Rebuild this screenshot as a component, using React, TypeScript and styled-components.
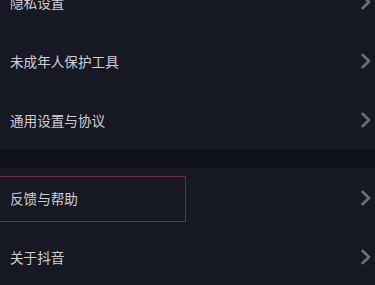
import React from "react"
import styled, { createGlobalStyle } from "styled-components"

const GlobalStyle = createGlobalStyle`
	html, body {
		margin: 0;
		padding: 0;
		background-color: #161823;
	}
`

const SPage = styled.div`
	width: 375px;
	height: 285px;
	overflow: hidden;
	background-color: #161823;
	font-family: "Noto Sans CJK SC", "Noto Sans", sans-serif;
`

const SList = styled.div`
	display: flex;
	flex-direction: column;
	margin-top: -28px;
`

const SRow = styled.div`
	position: relative;
	display: flex;
	align-items: center;
	justify-content: space-between;
	height: 59px;
	padding: 0 3px 0 10px;
	box-sizing: border-box;
`

const SLabel = styled.span`
	font-size: 13.6px;
	color: #cfd0d6;
`

const SDivider = styled.div`
	height: 19px;
	background-color: #10121a;
`

const SHighlight = styled.div`
	position: absolute;
	left: -2px;
	top: 8px;
	width: 188px;
	height: 46px;
	border: 1.5px solid #72294d;
	box-sizing: border-box;
	pointer-events: none;
`

const Chevron = () => (
	<svg width="13" height="16" viewBox="0 0 13 16">
		<path d="M3.5 1.8 L10 8 L3.5 14.2" fill="none" stroke="#6d6e78" strokeWidth="2.6" strokeLinecap="round" strokeLinejoin="round" />
	</svg>
)

type Item = { label: string; marked?: boolean }

const group1: Item[] = [
	{ label: "隐私设置" },
	{ label: "未成年人保护工具" },
	{ label: "通用设置与协议" },
]

const group2: Item[] = [
	{ label: "反馈与帮助", marked: true },
	{ label: "关于抖音" },
]

const Row = ({ item }: { item: Item }) => (
	<SRow>
		<SLabel>{item.label}</SLabel>
		<Chevron />
		{item.marked && <SHighlight />}
	</SRow>
)

export default function App() {
	return (
		<SPage>
			<GlobalStyle />
			<SList>
				{group1.map((item) => (
					<Row key={item.label} item={item} />
				))}
				<SDivider />
				{group2.map((item) => (
					<Row key={item.label} item={item} />
				))}
			</SList>
		</SPage>
	)
}
